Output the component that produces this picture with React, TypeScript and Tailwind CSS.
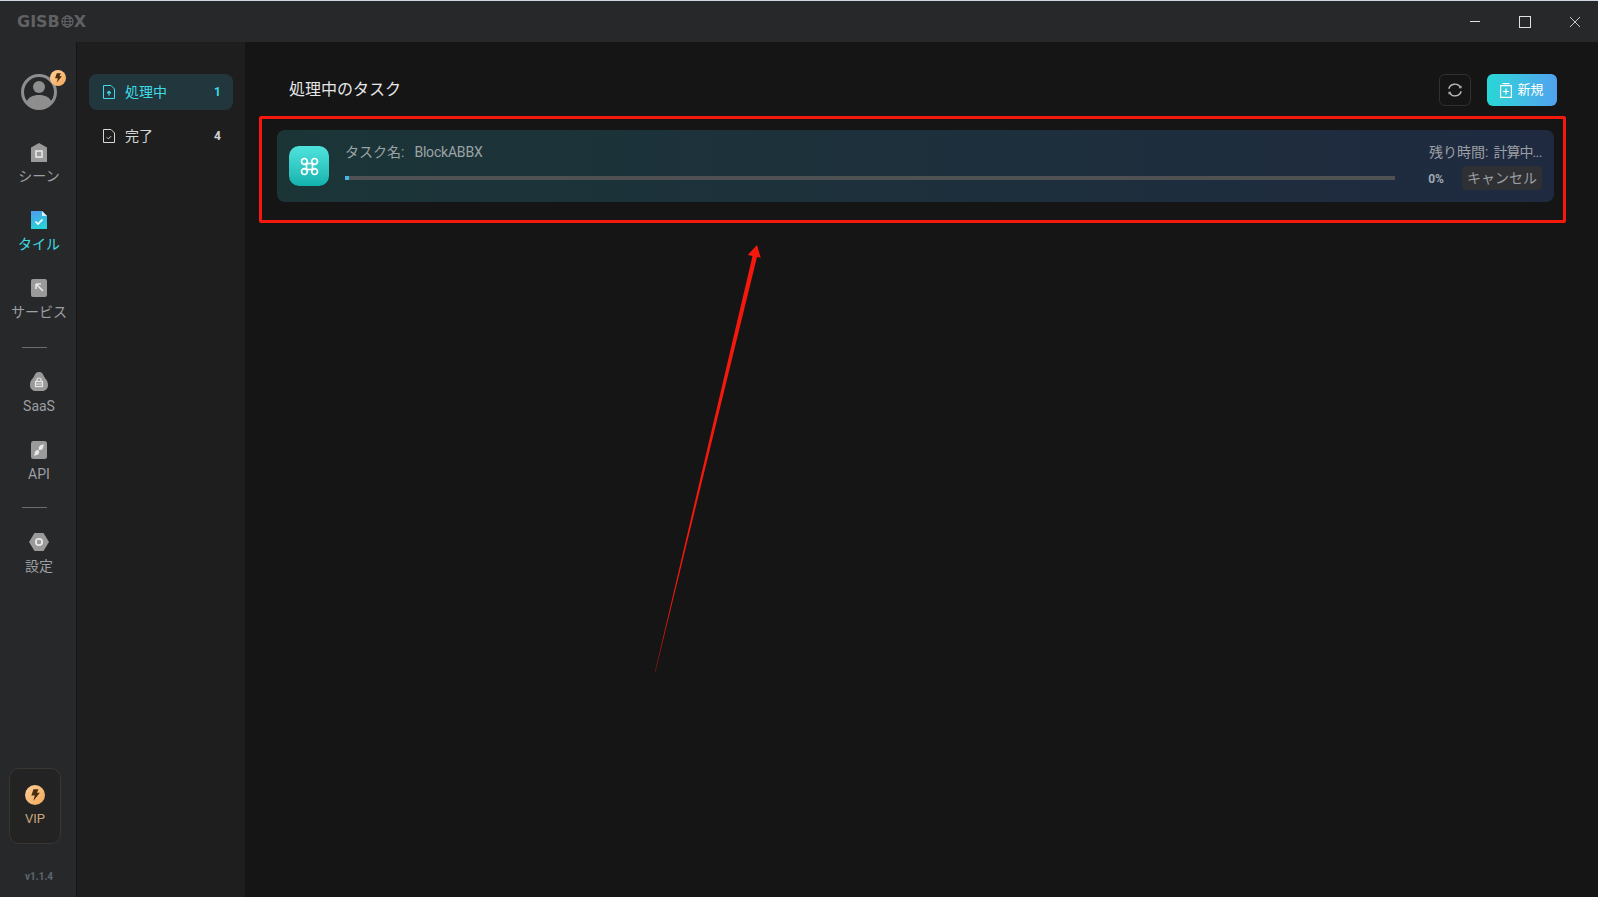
import React from 'react'

const font = { fontFamily: 'Roboto, "Noto Sans CJK JP", sans-serif' }

function Bolt({ className }: { className: string }) {
  return (
    <svg viewBox="0 0 20 20" className={className}>
      <circle cx="10" cy="10" r="10" fill="url(#vipGrad)" />
      <defs>
        <linearGradient id="vipGrad" x1="0" y1="0" x2="1" y2="1">
          <stop offset="0" stopColor="#fcd09a" />
          <stop offset="1" stopColor="#f5a658" />
        </linearGradient>
      </defs>
      <path d="M8.500 4.200h5l-1.600 3.600h3L8.300 16l1.500-5.600H6.300z" fill="#4a2c10" />
    </svg>
  )
}

function SceneIcon() {
  return (
    <svg viewBox="0 0 16 19" className="h-[19px] w-4">
      <path d="M8 0l8 4.500V19H0V4.500z" fill="#9a9a9a" />
      <rect x="5" y="8" width="6" height="6" fill="none" stroke="#e8e8e8" strokeWidth="1.600" />
    </svg>
  )
}

function TileIcon() {
  return (
    <svg viewBox="0 0 16 18" className="h-[18px] w-4">
      <defs>
        <linearGradient id="tileGrad" x1="0" y1="0" x2="0.3" y2="1">
          <stop offset="0" stopColor="#4f9bec" />
          <stop offset="1" stopColor="#2ad0d8" />
        </linearGradient>
      </defs>
      <path d="M0 0h11l5 5v13H0z" fill="url(#tileGrad)" />
      <path d="M11 0l5 5h-5z" fill="#d8f2f8" />
      <path d="M4.500 10.500l2.500 2.500 4.500-4.500" fill="none" stroke="#fff" strokeWidth="1.700" />
    </svg>
  )
}

function ServiceIcon() {
  return (
    <svg viewBox="0 0 16 18" className="h-[18px] w-4">
      <rect width="16" height="18" rx="2" fill="#9a9a9a" />
      <path d="M5 5h5M5 5v5M5 5l7 7" fill="none" stroke="#e8e8e8" strokeWidth="1.600" />
    </svg>
  )
}

function SaasIcon() {
  return (
    <svg viewBox="0 0 18 20" className="h-5 w-[18px]">
      <path d="M9 0c3 0 4 2 5 4.500 1 2 4 4 4 8.500 0 4-3 6-6 6H6c-3 0-6-2-6-6 0-4.500 3-6.500 4-8.500C5 2 6 0 9 0z" fill="#9a9a9a" />
      <rect x="5.500" y="9.500" width="7" height="5" fill="none" stroke="#e8e8e8" strokeWidth="1.200" />
      <path d="M7 9.500V8a2 2 0 0 1 4 0v1.500M5.500 12h7" fill="none" stroke="#e8e8e8" strokeWidth="1.200" />
    </svg>
  )
}

function ApiIcon() {
  return (
    <svg viewBox="0 0 16 18" className="h-[18px] w-4">
      <rect width="16" height="18" rx="2.500" fill="#9a9a9a" />
      <path d="M3.500 14.500l9-11" stroke="#e8e8e8" strokeWidth="1.300" />
      <ellipse cx="6" cy="11.500" rx="2.600" ry="2.100" fill="#e8e8e8" transform="rotate(-50 6 11.500)" />
      <ellipse cx="10" cy="6.500" rx="2.600" ry="2.100" fill="#e8e8e8" transform="rotate(-50 10 6.500)" />
      <path d="M6.700 8.700l2.600 1.300" stroke="#9a9a9a" strokeWidth="0.900" />
    </svg>
  )
}

function SettingsIcon() {
  return (
    <svg viewBox="0 0 20 18" className="h-[18px] w-5">
      <path d="M5.500 0h9L20 9l-5.500 9h-9L0 9z" fill="#9a9a9a" />
      <circle cx="10" cy="9" r="3.200" fill="none" stroke="#e8e8e8" strokeWidth="1.800" />
    </svg>
  )
}

function NavItem({ icon, label, active }: { icon: React.ReactNode; label: string; active?: boolean }) {
  return (
    <div className="flex h-[68px] w-full flex-col items-center pt-[1px]">
      <div className="flex h-5 items-center">{icon}</div>
      <div className={`mt-[4px] text-[14px] leading-[20px] ${active ? 'text-[#3fdbe6]' : 'text-[#9c9fa3]'}`}>{label}</div>
    </div>
  )
}

function DocIcon({ color, kind }: { color: string; kind: 'up' | 'check' }) {
  return (
    <svg viewBox="0 0 12 14" className="h-[14px] w-3" fill="none" stroke={color} strokeWidth="1">
      <path d="M.5.500h7.500l3.500 3.500v9.500H.5z" />
      {kind === 'up' ? (
        <path d="M6 10.500V7M4.200 8.200L6 6.400l1.800 1.800" strokeWidth="1.300" />
      ) : (
        <path d="M3.800 8.300l1.600 1.600 2.800-2.800" />
      )}
    </svg>
  )
}

function DroneIcon() {
  return (
    <svg viewBox="0 0 19 19" className="h-[19px] w-[19px]" fill="none" stroke="#fff" strokeWidth="1.700">
      <rect x="6.500" y="6.500" width="6" height="6" />
      <path d="M6.500 6.500L4.600 7.300A2.900 2.900 0 1 1 7.300 4.600z" />
      <path d="M12.500 6.500L11.700 4.600A2.900 2.900 0 1 1 14.400 7.300z" />
      <path d="M6.500 12.500L7.300 14.400A2.900 2.900 0 1 1 4.600 11.700z" />
      <path d="M12.500 12.500L14.400 11.700A2.900 2.900 0 1 1 11.700 14.400z" />
    </svg>
  )
}

function RefreshIcon() {
  return (
    <svg viewBox="0 0 16 16" className="h-4 w-4" fill="none" stroke="#b8b8b8" strokeWidth="1.400">
      <path d="M1.800 6.800A6.400 6.400 0 0 1 13.400 5.200" />
      <path d="M14.200 9.200A6.400 6.400 0 0 1 2.600 10.800" />
      <path d="M14 3.800v2h-2M2 12.200v-2h2" strokeWidth="1.100" />
    </svg>
  )
}

function TaskCard() {
  return (
    <div className="flex h-[72px] items-start rounded-lg bg-gradient-to-r from-[#1b3537] to-[#1f2a40] pl-3 pr-3 pt-4">
      <div className="flex h-10 w-10 items-center justify-center rounded-[10px] bg-gradient-to-b from-[#4fe3de] to-[#0fb3ae]">
        <DroneIcon />
      </div>
      <div className="ml-4 flex-1">
        <div className="text-[14px] leading-3 text-[#9ca3a6]">
          タスク名:<span className="ml-[10px] tracking-[-0.2px]">BlockABBX</span>
        </div>
        <div className="mt-[18px] h-1 w-[1050px] bg-[#4f5153]">
          <div className="h-1 w-1 bg-[#46b4e8]" />
        </div>
      </div>
      <div className="flex flex-col items-end">
        <div className="text-[14px] leading-3 text-[#9c9fa3]">
          残り時間:
          <span className="ml-[5px] tracking-[-1px]">計算中</span>
          <span className="tracking-[-0.5px]">...</span>
        </div>
        <div className="mt-2 flex items-center">
          <span className="mr-[18px] pt-[2px] text-[12px] font-bold text-[#9fa8b0]">0%</span>
          <span className="flex h-6 w-20 items-center justify-center rounded-sm bg-[#2f3033] text-[14px] text-[#9c9fa3]">キャンセル</span>
        </div>
      </div>
    </div>
  )
}

export default function App() {
  return (
    <div className="relative flex h-[897px] w-[1598px] flex-col overflow-hidden bg-[#151515]" style={font}>
      <div className="flex h-[42px] items-center justify-between border-t border-[#cfd6e4] border-b-[#1a1a1a] bg-[#27282a]">
        <span className="ml-[17px] flex items-center font-['DejaVu_Sans',sans-serif] text-[16px] font-bold leading-none text-[#606163]">
          GISB
          <svg viewBox="0 0 14 14" className="ml-[1px] h-[13px] w-[13px]" fill="none" stroke="#606163" strokeWidth="1.300">
            <circle cx="7" cy="7" r="6" />
            <ellipse cx="7" cy="7" rx="2.800" ry="6" />
            <path d="M1 7h12M2 3.800h10M2 10.200h10" strokeWidth="1" />
          </svg>
          X
        </span>
        <div className="mr-[18px] flex items-center">
          <div className="h-px w-[10px] bg-[#e0e0e0]" />
          <div className="ml-[39px] h-3 w-3 border border-[#e0e0e0]" />
          <svg viewBox="0 0 10 10" className="ml-[39px] h-[10px] w-[10px]" fill="none" stroke="#d8d8d8" strokeWidth="0.900">
            <path d="M0 0l10 10M10 0L0 10" />
          </svg>
        </div>
      </div>
      <div className="flex min-h-0 flex-1">
        <aside className="flex w-[77px] flex-col items-center border-r border-[#161616] bg-[#27282a] pl-[2px]">
          <div className="relative mt-[32px] h-[36px] w-[36px]">
            <svg viewBox="0 0 36 36" className="h-9 w-9">
              <circle cx="18" cy="18" r="16.500" fill="none" stroke="#8e8e8e" strokeWidth="3" />
              <circle cx="18" cy="13" r="6" fill="#8e8e8e" />
              <path d="M5 29c2-6 7-8 13-8s11 2 13 8c-3 4-8 6-13 6s-10-2-13-6z" fill="#8e8e8e" />
            </svg>
            <Bolt className="absolute -right-[9px] -top-[4px] h-4 w-4" />
          </div>
          <div className="mt-[31px] w-full">
            <NavItem icon={<SceneIcon />} label="シーン" />
            <NavItem icon={<TileIcon />} label="タイル" active />
            <NavItem icon={<ServiceIcon />} label="サービス" />
          </div>
          <div className="mb-[23px] ml-[-10px] mt-[2px] h-px w-[25px] bg-[#6b6c6e]" />
          <NavItem icon={<SaasIcon />} label="SaaS" />
          <NavItem icon={<ApiIcon />} label="API" />
          <div className="mb-[23px] ml-[-10px] mt-0 h-px w-[25px] bg-[#6b6c6e]" />
          <NavItem icon={<SettingsIcon />} label="設定" />
          <div className="ml-[-8px] mt-auto flex h-[76px] w-[52px] flex-col items-center rounded-[10px] border border-[#3a3632] bg-[#232323] pt-4">
            <Bolt className="h-5 w-5" />
            <span className="mt-[4px] text-[13px] text-[#c9a67c]">VIP</span>
          </div>
          <div className="mb-[14px] mt-[27px] text-[10px] font-bold leading-3 text-[#5d6770]">v1.1.4</div>
        </aside>
        <nav className="w-[168px] bg-[#1e1e1e] px-3 pt-[32px]">
          <div className="flex h-9 items-center justify-between rounded-lg bg-[#21373d] pl-[14px] pr-3 text-[#3fdbe6]">
            <span className="flex items-center text-[14px]">
              <DocIcon color="#3fdbe6" kind="up" />
              <span className="ml-[10px]">処理中</span>
            </span>
            <span className="text-[12px] font-bold">1</span>
          </div>
          <div className="mt-2 flex h-9 items-center justify-between pl-[14px] pr-3 text-[#d6d6d6]">
            <span className="flex items-center text-[14px]">
              <DocIcon color="#d6d6d6" kind="check" />
              <span className="ml-[10px]">完了</span>
            </span>
            <span className="text-[12px] font-bold">4</span>
          </div>
        </nav>
        <main className="flex-1 pl-[33px] pr-[41px] pt-[32px]">
          <div className="flex h-8 items-center justify-between pl-[11px]">
            <h1 className="text-[16px] font-normal text-[#e4e6e8]">処理中のタスク</h1>
            <div className="flex items-center gap-4">
              <button className="flex h-8 w-8 items-center justify-center rounded-md border border-[#303030]">
                <RefreshIcon />
              </button>
              <button className="flex h-8 w-[70px] items-center justify-center rounded-md bg-gradient-to-r from-[#26d6d6] to-[#4fa2ee] text-[13px] text-white">
                <svg viewBox="0 0 12 15" className="mr-[5px] h-[15px] w-3" fill="none" stroke="#fff" strokeWidth="1.200">
                  <path d="M.6 2.600h10.800v11.800H.6zM6 5.500v6M3 8.500h6M2.500.7h7" />
                </svg>
                新規
              </button>
            </div>
          </div>
          <div className="-mr-[9px] ml-[-19px] mt-[10px] rounded-[2px] border-[3px] border-[#f5190d] pb-[18px] pl-[15px] pr-[9px] pt-[11px]">
            <TaskCard />
          </div>
        </main>
      </div>
      <svg className="pointer-events-none absolute left-[650px] top-[240px] h-[435px] w-[115px]" viewBox="650 240 115 435">
        <path d="M655 672L752.500 256L747.700 255L757 245L760.700 257.700L757 257L655.300 672Z" fill="#f5190d" />
      </svg>
    </div>
  )
}
